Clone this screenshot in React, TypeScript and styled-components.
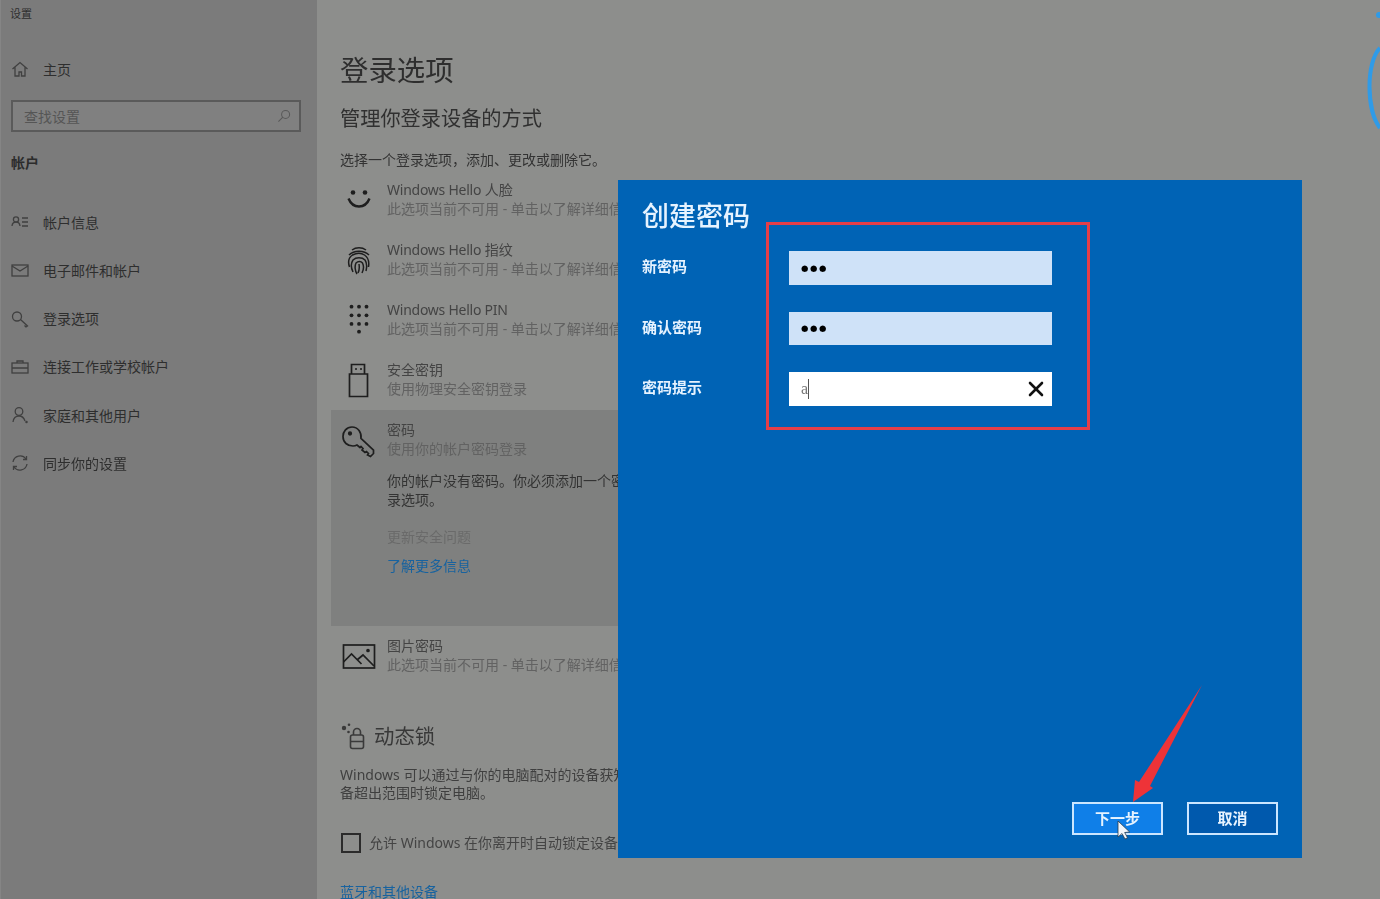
import React from "react";
import styled, { createGlobalStyle } from "styled-components";
import { X } from "lucide-react";

const GlobalStyle = createGlobalStyle`
  html, body {
    margin: 0;
    padding: 0;
    height: 100%;
    background: #8d8e8c;
  }
  * { box-sizing: border-box; }
`;

const font = `"Noto Sans", "Noto Sans CJK SC", sans-serif`;

const Screen = styled.div`
  position: relative;
  width: 1380px;
  height: 899px;
  overflow: hidden;
  background: #8d8e8c;
  font-family: ${font};
  color: #3a3a3a;
`;

const Blurred = styled.div`
  display: flex;
  width: 100%;
  height: 100%;
  filter: blur(0.5px);
`;

const Sidebar = styled.aside`
  flex: 0 0 317px;
  height: 899px;
  padding-top: 4px;
  background: #7b7b7b;
  border-left: 1px solid #858585;
`;

const AppName = styled.div`
  height: 20px;
  padding-left: 9px;
  font-size: 11px;
  line-height: 20px;
  color: #2e2e2e;
`;

const NavRow = styled.div<{ $top?: number }>`
  display: flex;
  align-items: center;
  height: 48.2px;
  margin-top: ${(p) => p.$top ?? 0}px;
  padding-left: 9px;
  font-size: 14px;
  color: #2e2e2e;
  span { padding-bottom: 1px; }
  svg { flex: 0 0 20px; margin-right: 13px; }
`;

const SearchBox = styled.div`
  display: flex;
  align-items: center;
  justify-content: space-between;
  width: 290px;
  height: 32px;
  margin: 7px 0 0 10px;
  padding: 0 7px 1px 11px;
  border: 2px solid #5a5a5a;
  background: #808080;
  font-size: 14px;
  color: #555;
`;

const GroupLabel = styled.div`
  height: 20px;
  margin: 21px 0 0 10px;
  font-size: 14px;
  line-height: 20px;
  font-weight: 700;
  color: #2c2c2c;
`;

const Main = styled.main`
  flex: 1;
  padding: 50px 0 0 14px;
  white-space: nowrap;
`;

const PageTitle = styled.h1`
  margin: 0 0 0 9px;
  font-size: 28.4px;
  font-weight: 400;
  line-height: 40px;
  color: #2e2e2e;
`;

const PageSubtitle = styled.h2`
  margin: 14px 0 0 9px;
  font-size: 20.2px;
  font-weight: 400;
  line-height: 28px;
  color: #303030;
`;

const Intro = styled.p`
  margin: 18px 0 0 9px;
  font-size: 14px;
  line-height: 20px;
  color: #333;
`;

const OptionRow = styled.div<{ $selected?: boolean }>`
  display: flex;
  width: 300px;
  height: ${(p) => (p.$selected ? 216 : 60)}px;
  padding-top: 10px;
  background: ${(p) => (p.$selected ? "#7f807f" : "transparent")};
`;

const OptionIcon = styled.div`
  flex: 0 0 56px;
  display: flex;
  justify-content: center;
  padding: 4px 0 0 0;
  color: #1e1e1e;
  svg { overflow: visible; }
`;

const OptionBody = styled.div`
  font-size: 14px;
  line-height: 19px;
`;

const OptionTitle = styled.div`
  color: #444;
`;

const LatinName = styled.span`
  letter-spacing: -0.25px;
`;

const OptionHint = styled.div`
  color: #626262;
`;

const OptionDetail = styled.div`
  margin-top: 13px;
  line-height: 19px;
  color: #333;
`;

const DisabledLink = styled.div`
  margin-top: 18px;
  color: #6a6a6a;
`;

const InfoLink = styled.div`
  margin-top: 10px;
  color: #17629f;
`;

const SectionHeading = styled.div`
  display: flex;
  align-items: center;
  gap: 9px;
  height: 28px;
  margin: 36px 0 0 9px;
  font-size: 20.4px;
  color: #383838;
  span { padding-bottom: 2px; }
`;

const Paragraph = styled.p`
  margin: 16px 0 0 9px;
  font-size: 14px;
  line-height: 18px;
  color: #3f3f3f;
`;

const CheckRow = styled.div`
  display: flex;
  align-items: center;
  gap: 8px;
  margin: 30px 0 0 10px;
  font-size: 14px;
  color: #444;
  span:last-child { padding-bottom: 2px; }
`;

const CheckBox = styled.span`
  display: block;
  width: 20px;
  height: 20px;
  border: 2px solid #2b2b2b;
`;

const BottomLink = styled.div`
  margin: 31px 0 0 9px;
  font-size: 14px;
  line-height: 14px;
  color: #17629f;
`;

const Dialog = styled.section`
  position: absolute;
  left: 618px;
  top: 180px;
  display: flex;
  flex-direction: column;
  width: 684px;
  height: 678px;
  padding: 18px 24px 23px;
  background: #0063b5;
  color: #e6f3ff;
  filter: blur(0.4px);
`;

const DialogTitle = styled.h3`
  margin: 0;
  font-size: 27px;
  font-weight: 500;
  line-height: 36px;
`;

const Form = styled.div`
  display: grid;
  grid-template-columns: 147px 263px;
  grid-auto-rows: 33.5px;
  row-gap: 27px;
  align-items: center;
  margin-top: 17px;
`;

const FieldLabel = styled.label`
  padding-bottom: 4px;
  font-size: 15px;
  font-weight: 700;
`;

const Field = styled.div<{ $active?: boolean }>`
  display: flex;
  align-items: center;
  justify-content: space-between;
  height: 33.5px;
  padding: 0 4px 0 12px;
  background: ${(p) => (p.$active ? "#fff" : "#cfe2f8")};
  color: #000;
`;

const Dots = styled.span`
  font-family: "DejaVu Sans", sans-serif;
  font-size: 8.5px;
  letter-spacing: 1.6px;
`;

const TypedText = styled.span`
  display: flex;
  align-items: center;
  font-family: "Liberation Serif", serif;
  font-size: 16px;
  color: #777;
  &::after {
    content: "";
    display: block;
    width: 1px;
    height: 20px;
    background: #555;
  }
`;

const Footer = styled.div`
  display: flex;
  justify-content: flex-end;
  gap: 24px;
  margin-top: auto;
`;

const DialogButton = styled.button<{ $primary?: boolean }>`
  width: 91px;
  height: 33px;
  padding: 0 0 3px;
  border: 2.5px solid #cbe6ff;
  background: ${(p) => (p.$primary ? "#0f7fe8" : "#0059ad")};
  color: #e6f3ff;
  font-family: ${font};
  font-size: 15px;
  font-weight: 700;
`;

const Annotation = styled.div`
  position: absolute;
  left: 766px;
  top: 222px;
  width: 324px;
  height: 208px;
  border: 3px solid #e53e48;
  pointer-events: none;
`;

const OverlaySvg = styled.svg`
  position: absolute;
  left: 0;
  top: 0;
  pointer-events: none;
`;

const line = { fill: "none", stroke: "currentColor", strokeWidth: 1.3 };

const Ico: React.FC<{ children: React.ReactNode; size?: number; color?: string }> = ({ children, size = 20, color = "#404040" }) => (
  <svg width={size} height={size} viewBox="0 0 20 20" style={{ color }} {...line}>
    {children}
  </svg>
);

const navItems: [string, React.ReactNode][] = [
  ["帐户信息", <><circle cx="6" cy="7.5" r="2.6" /><path d="M2 14c.3-3 2-4 4-4s3.700 1 4 4M12 6h6M12 10h6M12 14h6" /></>],
  ["电子邮件和帐户", <><rect x="2" y="5" width="16" height="11" /><path d="M2 6l8 5 8-5" /></>],
  ["登录选项", <><circle cx="7" cy="7.500" r="4.500" /><path d="M10.500 10.500l7 6.500-1.500 1-1.500-1.500" /></>],
  ["连接工作或学校帐户", <><rect x="2" y="6" width="16" height="10" /><path d="M7 6V4h6v2M2 11h16" /></>],
  ["家庭和其他用户", <><circle cx="9" cy="6.500" r="3.800" /><path d="M3 17c.5-4 3-6 6-6s5 2 6 5" /><circle cx="16.500" cy="17" r=".6" /></>],
  ["同步你的设置", <><path d="M3 9a7.200 7.200 0 0 1 13-3M17 11a7.200 7.200 0 0 1-13 3" /><path d="M16.500 3v3.500H13M3.500 17v-3.500H7" /></>],
];

const unavailable = "此选项当前不可用 - 单击以了解详细信息";

const BigIcon: React.FC<{ children: React.ReactNode; size?: number }> = ({ children, size = 32 }) => (
  <svg width={size} height={size} viewBox="0 0 32 32" fill="none" stroke="currentColor" strokeWidth="1.6">
    {children}
  </svg>
);

const Face = () => (
  <BigIcon>
    <circle cx="10" cy="8.500" r="2.300" fill="currentColor" stroke="none" />
    <circle cx="22" cy="8.500" r="2.300" fill="currentColor" stroke="none" />
    <path d="M5.500 14.500c2 5 6 8 10.500 8s8.500-3 10.500-8" strokeWidth="2.400" />
  </BigIcon>
);

const Fingerprint = () => (
  <BigIcon>
    <path
      d="M9 6c4-3 10-3 14 0M6 11c5-5 15-5 20 0M6.500 23c-2-6 0-10 3-12 4-2 9-2 12 0 3 2 5 6 4 12M10 28c-2-4-2-9 0-12 3-3 9-3 12 0 2 3 2 7 1 11M14 30c-2-3-2.500-8-1-11 2-2 5-2 6.500 0 1.500 3 1 7-.5 10M16 20c.5 3 0 7-1 9"
      strokeWidth="1.500"
    />
  </BigIcon>
);

const Keypad = () => (
  <svg width="32" height="32" viewBox="0 0 32 32" fill="currentColor">
    {[0, 1, 2].flatMap((r) =>
      [0, 1, 2].map((c) => <circle key={`${r}${c}`} cx={8.500 + c * 7.500} cy={2.700 + r * 8.600} r="1.900" />)
    )}
    <circle cx="16" cy="27.700" r="1.900" />
  </svg>
);

const UsbKey = () => (
  <BigIcon>
    <path d="M8.500 10V0.500h13V10M6.500 10h18v22.500h-18z" strokeWidth="1.700" />
    <path d="M12 5h2M17 5h2" />
  </BigIcon>
);

const KeyIcon = () => (
  <svg width="36" height="36" viewBox="0 0 36 36" fill="none" stroke="currentColor" strokeWidth="1.700">
    <path d="M20 14.500c.8-6-3-11.500-9-11.500C5.500 3 2 7.500 2 12.500c0 6 4.500 9.500 10 9.500 1.500 0 3-.4 4-1l3 2.500 1-1 2 2-1 1.500 3 2.500 1.500-1 2 2-1 1.500 3 1.500 3-3v-3.500z" />
    <circle cx="9" cy="9.500" r="1.300" fill="currentColor" />
  </svg>
);

const PictureIcon = () => (
  <svg width="32" height="32" viewBox="0 0 32 32" fill="none" stroke="currentColor" strokeWidth="1.700">
    <rect x="0.500" y="5" width="31" height="23" />
    <path d="M0.500 22l8-8 10 10M14 20l6-5 11 11" />
    <circle cx="25" cy="10.500" r="1" fill="currentColor" />
  </svg>
);

const LockSpark = () => (
  <svg width="25" height="27" viewBox="0 0 25 27" fill="none" stroke="#3a3a3a" strokeWidth="1.600">
    <rect x="10.500" y="12" width="13" height="13.500" rx="2" />
    <path d="M13.500 12V9a3.500 3.500 0 0 1 7 0v3M10.500 18.500h13" />
    <circle cx="4" cy="5" r="2.200" fill="#3a3a3a" stroke="none" />
    <circle cx="9" cy="1.800" r="1.300" fill="#3a3a3a" stroke="none" />
    <circle cx="8.500" cy="9" r="1.300" fill="#3a3a3a" stroke="none" />
  </svg>
);

const App: React.FC = () => (
  <Screen>
    <GlobalStyle />
    <Blurred>
      <Sidebar>
        <AppName>设置</AppName>
        <NavRow $top={21}>
          <Ico>
            <path d="M2.500 10L10 3.500 17.500 10M5 8v9h4v-4h2.500v4H15V8" />
          </Ico>
          <span>主页</span>
        </NavRow>
        <SearchBox>
          <span>查找设置</span>
          <Ico size={16} color="#585858">
            <circle cx="12" cy="8" r="5" />
            <path d="M8.500 11.500L3 17" />
          </Ico>
        </SearchBox>
        <GroupLabel>帐户</GroupLabel>
        <NavRow $top={25}>
          <Ico>{navItems[0][1]}</Ico>
          <span>{navItems[0][0]}</span>
        </NavRow>
        {navItems.slice(1).map(([label, icon]) => (
          <NavRow key={label}>
            <Ico>{icon}</Ico>
            <span>{label}</span>
          </NavRow>
        ))}
      </Sidebar>
      <Main>
        <PageTitle>登录选项</PageTitle>
        <PageSubtitle>管理你登录设备的方式</PageSubtitle>
        <Intro>选择一个登录选项，添加、更改或删除它。</Intro>
        <OptionRow>
          <OptionIcon><Face /></OptionIcon>
          <OptionBody>
            <OptionTitle><LatinName>Windows Hello</LatinName> 人脸</OptionTitle>
            <OptionHint>{unavailable}</OptionHint>
          </OptionBody>
        </OptionRow>
        <OptionRow>
          <OptionIcon><Fingerprint /></OptionIcon>
          <OptionBody>
            <OptionTitle><LatinName>Windows Hello</LatinName> 指纹</OptionTitle>
            <OptionHint>{unavailable}</OptionHint>
          </OptionBody>
        </OptionRow>
        <OptionRow>
          <OptionIcon><Keypad /></OptionIcon>
          <OptionBody>
            <OptionTitle><LatinName>Windows Hello PIN</LatinName></OptionTitle>
            <OptionHint>{unavailable}</OptionHint>
          </OptionBody>
        </OptionRow>
        <OptionRow>
          <OptionIcon><UsbKey /></OptionIcon>
          <OptionBody>
            <OptionTitle>安全密钥</OptionTitle>
            <OptionHint>使用物理安全密钥登录</OptionHint>
          </OptionBody>
        </OptionRow>
        <OptionRow $selected>
          <OptionIcon><KeyIcon /></OptionIcon>
          <OptionBody>
            <OptionTitle>密码</OptionTitle>
            <OptionHint>使用你的帐户密码登录</OptionHint>
            <OptionDetail>
              你的帐户没有密码。你必须添加一个密码才能使用其他登
              <br />
              录选项。
            </OptionDetail>
            <DisabledLink>更新安全问题</DisabledLink>
            <InfoLink>了解更多信息</InfoLink>
          </OptionBody>
        </OptionRow>
        <OptionRow>
          <OptionIcon><PictureIcon /></OptionIcon>
          <OptionBody>
            <OptionTitle>图片密码</OptionTitle>
            <OptionHint>{unavailable}</OptionHint>
          </OptionBody>
        </OptionRow>
        <SectionHeading>
          <LockSpark />
          <span>动态锁</span>
        </SectionHeading>
        <Paragraph>
          Windows 可以通过与你的电脑配对的设备获知你何时离开，并在这些设
          <br />
          备超出范围时锁定电脑。
        </Paragraph>
        <CheckRow>
          <CheckBox />
          <span>允许 Windows 在你离开时自动锁定设备</span>
        </CheckRow>
        <BottomLink>蓝牙和其他设备</BottomLink>
      </Main>
    </Blurred>

    <Dialog>
      <DialogTitle>创建密码</DialogTitle>
      <Form>
        <FieldLabel>新密码</FieldLabel>
        <Field><Dots>●●●</Dots></Field>
        <FieldLabel>确认密码</FieldLabel>
        <Field><Dots>●●●</Dots></Field>
        <FieldLabel>密码提示</FieldLabel>
        <Field $active>
          <TypedText>a</TypedText>
          <X size={24} strokeWidth={2.6} color="#111" />
        </Field>
      </Form>
      <Footer>
        <DialogButton $primary>下一步</DialogButton>
        <DialogButton>取消</DialogButton>
      </Footer>
    </Dialog>

    <Annotation />
    <OverlaySvg width="1380" height="899" viewBox="0 0 1380 899">
      <path d="M1380 48c-14 14-14 62 0 80" fill="none" stroke="#2f9be8" strokeWidth="4" />
      <circle cx="1379" cy="15" r="3" fill="#2f9be8" />
      <polygon points="1202,685 1150,786 1153,788 1133,802 1135,780 1139,782" fill="#ee3338" />
      <path
        d="M1118 821v16l4-3.500 3 5.500 2.500-1.200-2.800-5.300 5-.5z"
        fill="#f2f6fa"
        stroke="#2a3a4a"
        strokeWidth="0.8"
      />
    </OverlaySvg>
  </Screen>
);

export default App;
